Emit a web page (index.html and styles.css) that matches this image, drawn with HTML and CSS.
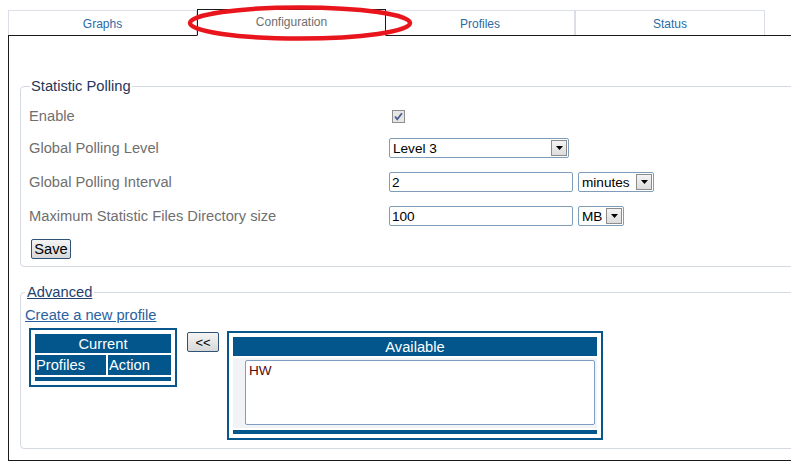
FILE: index.html
```html
<!DOCTYPE html>
<html>
<head>
<meta charset="utf-8">
<link rel="stylesheet" href="styles.css">
</head>
<body>
<div class="page">
  <div class="tabs">
    <div class="tab">Graphs</div>
    <div class="tab active">Configuration</div>
    <div class="tab">Profiles</div>
    <div class="tab">Status</div>
  </div>
  <div class="panel">
    <fieldset class="box polling">
      <legend class="legend">Statistic Polling</legend>
      <div class="grid">
        <div class="lbl">Enable</div>
        <div class="ctl">
          <svg class="check" width="13" height="13" viewBox="0 0 13 13"><rect x="0.5" y="0.5" width="12" height="12" fill="#e6e6e6" stroke="#8e8f8f"/><path d="M3 6.5 L5.2 9.2 L10 3.2" fill="none" stroke="#4d5e8e" stroke-width="1.8"/></svg>
        </div>
        <div class="lbl">Global Polling Level</div>
        <div class="ctl">
          <div class="sel w-level"><span class="sel-text">Level 3</span><span class="arrow"><svg width="7" height="4" viewBox="0 0 7 4"><path d="M0 0 H7 L3.5 4 Z" fill="#000"/></svg></span></div>
        </div>
        <div class="lbl">Global Polling Interval</div>
        <div class="ctl">
          <div class="inp">2</div>
          <div class="sel w-min"><span class="sel-text">minutes</span><span class="arrow"><svg width="7" height="4" viewBox="0 0 7 4"><path d="M0 0 H7 L3.5 4 Z" fill="#000"/></svg></span></div>
        </div>
        <div class="lbl">Maximum Statistic Files Directory size</div>
        <div class="ctl">
          <div class="inp">100</div>
          <div class="sel w-mb"><span class="sel-text">MB</span><span class="arrow"><svg width="7" height="4" viewBox="0 0 7 4"><path d="M0 0 H7 L3.5 4 Z" fill="#000"/></svg></span></div>
        </div>
      </div>
      <button class="btn save">Save</button>
    </fieldset>

    <fieldset class="box advanced">
      <legend class="legend adv-legend">Advanced</legend>
      <a class="newlink" href="#">Create a new profile</a>
      <div class="profiles">
        <div class="bluebox current">
          <div class="bhead">Current</div>
          <div class="cells">
            <div class="cell c1">Profiles</div>
            <div class="cell c2">Action</div>
          </div>
          <div class="bbar"></div>
        </div>
        <button class="btn move">&lt;&lt;</button>
        <div class="bluebox available">
          <div class="bhead">Available</div>
          <div class="listwrap">
            <div class="listbox"><div class="opt">HW</div></div>
          </div>
          <div class="bbar"></div>
        </div>
      </div>
    </fieldset>
  </div>
  <svg class="annot" width="230" height="40" viewBox="0 0 230 40"><ellipse cx="113" cy="18" rx="110" ry="15.5" fill="none" stroke="#e8151d" stroke-width="4.5"/></svg>
</div>
</body>
</html>
```

FILE: styles.css
```css
html, body {
  margin: 0;
  padding: 0;
  overflow: hidden;
  background: #fff;
}
body {
  font-family: "Liberation Sans", Arial, sans-serif;
}
.page {
  position: relative;
  padding: 9px 0 0 8px;
  width: 900px;
}
.tabs {
  display: flex;
  align-items: flex-end;
  height: 26px;
}
.tab {
  box-sizing: border-box;
  width: 189px;
  height: 25px;
  border: 1px solid #dcdfe9;
  border-bottom: none;
  border-left-width: 0;
  font-size: 12px;
  color: #2b6aa6;
  display: flex;
  align-items: center;
  justify-content: center;
  padding-top: 1px;
}
.tab:first-child {
  border-left-width: 1px;
}
.tab:nth-child(3) {
  width: 190px;
  border-right-width: 2px;
}
.tab.active {
  width: 189px;
  height: 27px;
  border: 1px solid #1b1b1b;
  border-bottom: 1px solid #fff;
  background: #fff;
  color: #6e6e6e;
  margin-bottom: -1px;
  position: relative;
  z-index: 1;
  padding-bottom: 3px;
}
.panel {
  border-top: 1px solid #1b1b1b;
  border-left: 1px solid #1b1b1b;
  border-bottom: 1px solid #1b1b1b;
  height: 426px;
  box-sizing: border-box;
  padding: 42px 0 0 11px;
}
.box {
  margin: 0;
  border: 1px solid #d3dae3;
  border-radius: 4px;
  min-width: 0;
}
.legend {
  font-size: 14.7px;
  color: #26365a;
  padding: 0 1px;
  margin-left: 1px;
}
.polling {
  padding: 7px 0 7px 8px;
}
.grid {
  display: grid;
  grid-template-columns: 360px auto;
  grid-template-rows: 30px 34px 34px 34px;
}
.lbl {
  font-size: 14.7px;
  color: #6f6f6f;
  display: flex;
  align-items: center;
}
.ctl {
  display: flex;
  align-items: center;
  gap: 5px;
}
.check {
  margin-left: 3px;
  display: block;
}
.sel {
  box-sizing: border-box;
  height: 20px;
  border: 1px solid #7f9db9;
  border-radius: 2px;
  display: flex;
  align-items: center;
  justify-content: space-between;
  padding: 0 1px 0 3px;
  font-size: 13.6px;
  color: #000;
  background: #fff;
}
.w-level { width: 180px; }
.w-min { width: 76px; }
.w-mb { width: 46px; }
.arrow {
  box-sizing: border-box;
  width: 16px;
  height: 16px;
  border: 1px solid #8c8c8c;
  background: linear-gradient(#f4f4f4, #dcdcdc);
  display: flex;
  align-items: center;
  justify-content: center;
}
.arrow svg { display: block; }
.inp {
  box-sizing: border-box;
  width: 184px;
  height: 20px;
  border: 1px solid #7f9db9;
  border-radius: 2px;
  font-size: 13.6px;
  color: #000;
  display: flex;
  align-items: center;
  padding-left: 2px;
}
.btn {
  font-family: "Liberation Sans", Arial, sans-serif;
  border: 1px solid #2f5377;
  border-radius: 2px;
  background: linear-gradient(#f4f4f4, #d8d8d8);
  color: #000;
  padding: 0;
  cursor: pointer;
}
.save {
  display: block;
  margin: 6px 0 0 2px;
  width: 40px;
  height: 20px;
  font-size: 14.7px;
}
.advanced {
  margin-top: 17px;
  padding: 7px 0 8px 4px;
}
.adv-legend {
  margin-left: 0;
  padding: 0 2px 0 2px;
  color: #22406e;
  text-decoration: underline;
}
.newlink {
  display: block;
  font-size: 14.7px;
  color: #2962a0;
  text-decoration: underline;
  margin-left: 0;
  line-height: 16px;
}
.profiles {
  display: flex;
  align-items: flex-start;
  margin-top: 5px;
  padding-left: 4px;
}
.bluebox {
  box-sizing: border-box;
  border: 2px solid #07578c;
  padding: 4px;
}
.current {
  width: 148px;
}
.bhead {
  background: #02568c;
  color: #fff;
  font-size: 14.7px;
  height: 19px;
  display: flex;
  align-items: center;
  justify-content: center;
}
.cells {
  display: flex;
  gap: 2px;
  margin-top: 2px;
}
.cell {
  background: #02568c;
  color: #fff;
  font-size: 14.7px;
  height: 20px;
  display: flex;
  align-items: center;
  padding-left: 1px;
}
.c1 { width: 70px; }
.c2 { flex: 1; }
.bbar {
  background: #02568c;
  height: 4px;
  margin-top: 2px;
}
.move {
  margin: 4px 8px 0 10px;
  width: 32px;
  height: 20px;
  font-size: 13px;
}
.available {
  width: 376px;
  margin-top: 3px;
}
.listwrap {
  background: #f1f3f7;
  margin-top: 2px;
  padding: 2px 2px 3px 12px;
}
.listbox {
  box-sizing: border-box;
  height: 65px;
  border: 1px solid #7f9cc2;
  border-radius: 2px;
  background: #fff;
  padding: 2px 3px;
}
.opt {
  font-size: 13.6px;
  color: #5a0a0a;
}
.annot {
  position: absolute;
  left: 187px;
  top: 5px;
  z-index: 2;
}
```
